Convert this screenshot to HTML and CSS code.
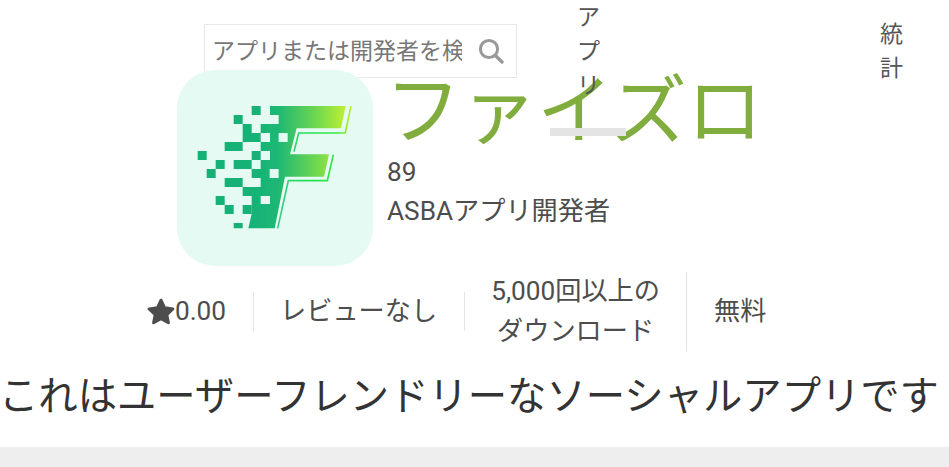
FILE: index.html
```html
<!DOCTYPE html>
<html lang="ja">
<head>
<meta charset="utf-8">
<title>ファイズロ</title>
<link rel="stylesheet" href="styles.css">
</head>
<body>
<header class="header">
  <form class="search">
    <input class="search-input" type="text" placeholder="アプリまたは開発者を検索">
    <svg class="search-icon" viewBox="0 0 26 26" width="26" height="26"><circle cx="11" cy="11" r="8.6" fill="none" stroke="#999" stroke-width="3"/><path d="M17.2 17.2 L24 24" stroke="#999" stroke-width="3.4" stroke-linecap="round"/></svg>
  </form>
  <nav class="nav">
    <a class="nav-item nav-apps">アプリ<span class="nav-bar"></span></a>
    <a class="nav-item nav-stats">統計</a>
  </nav>
</header>
<section class="hero">
  <div class="app-icon">
    <svg viewBox="21 30 588 588" width="196" height="196">
      <defs>
        <linearGradient id="fg" gradientUnits="userSpaceOnUse" x1="240" y1="0" x2="530" y2="0">
          <stop offset="0" stop-color="#13b177"/>
          <stop offset=".3" stop-color="#1fb873"/>
          <stop offset=".7" stop-color="#72d84f"/>
          <stop offset="1" stop-color="#c2f134"/>
        </linearGradient>
        <linearGradient id="ln" gradientUnits="userSpaceOnUse" x1="320" y1="0" x2="545" y2="0">
          <stop offset="0" stop-color="#3fc98f"/>
          <stop offset=".35" stop-color="#22e05a"/>
          <stop offset=".8" stop-color="#35e83c"/>
          <stop offset="1" stop-color="#c6f02c"/>
        </linearGradient>
        <filter id="soft" x="-5%" y="-5%" width="110%" height="110%"><feGaussianBlur stdDeviation="1.1"/></filter>
      </defs>
      <g filter="url(#soft)">
        <path fill="url(#fg)" d="M300 138H527L513 205H380L360 283H477L462 350H345L314 505H235L245 462V408H218V381H272V354H245V327H272V300H300V273H272V246H300V219H272V192H326V165H300Z"/>
        <path fill="#e5faf2" d="M326 219h27v27h-27zM299 327h27v27h-27zM272 408h28v24h-28z"/>
        <g fill="#14b176">
          <path d="M245 138h27v27h-27zM191 165h27v27h-27zM218 192h27v27h27v27h-54zM164 246h54v27h-54zM245 273h27v27h-27zM83 273h27v27H83zM137 300h27v27h-27zM191 300h54v27h-54zM110 327h27v27h-27zM164 354h54v27h-54zM137 408h27v27h-27zM164 435h27v27h-27zM218 435h27v27h-27zM191 489h27v16h-27z"/>
        </g>
        <path fill="none" stroke="url(#ln)" stroke-width="5" d="M543 138L526 219H386L372 275"/>
        <path fill="none" stroke="url(#ln)" stroke-width="5" d="M490 284L472 362H355L323 505"/>
      </g>
    </svg>
  </div>
  <div class="app-info">
    <h1 class="app-title">ファイズロ</h1>
    <div class="app-line">89</div>
    <div class="app-line">ASBAアプリ開発者</div>
  </div>
</section>
<section class="stats">
  <div class="stat stat-rating">
    <svg class="star" viewBox="0 0 28 27" width="28" height="27"><path fill="#4d4d4d" stroke="#4d4d4d" stroke-width="3" stroke-linejoin="round" d="M14 2.2l3.6 7.6 8.3 1.1-6.1 5.7 1.6 8.2L14 20.8l-7.4 4 1.6-8.2-6.1-5.7 8.3-1.1z"/></svg>
    <span>0.00</span>
  </div>
  <div class="stat stat-reviews">レビューなし</div>
  <div class="stat">5,000回以上の<br>ダウンロード</div>
  <div class="stat stat-last">無料</div>
</section>
<p class="desc">これはユーザーフレンドリーなソーシャルアプリです</p>
<div class="band"></div>
</body>
</html>
```
FILE: styles.css
```css
* { box-sizing: border-box; }
html, body { margin: 0; padding: 0; }
body {
  width: 949px;
  height: 467px;
  overflow: hidden;
  background: #fff;
  color: #4d4d4d;
  font-family: Roboto, "Noto Sans CJK JP", sans-serif;
}
.header {
  display: flex;
  align-items: center;
  height: 102px;
  padding-left: 204px;
}
.search {
  display: flex;
  align-items: center;
  width: 313px;
  height: 54px;
  padding: 0 12px 0 7px;
  border: 1px solid #e8e8e8;
  background: #fff;
}
.search-input {
  flex: 1;
  min-width: 0;
  border: 0;
  padding: 0;
  outline: 0;
  background: transparent;
  font: 23px Roboto, "Noto Sans CJK JP", sans-serif;
  color: #4d4d4d;
}
.search-input::placeholder { color: #777; opacity: 1; }
.search-icon { flex: none; margin-left: 16px; }
.nav { display: flex; align-items: center; align-self: flex-start; padding-top: 1px; }
.nav-item {
  display: block;
  position: relative;
  font-size: 23px;
  line-height: 34px;
  width: 24px;
  color: #555;
}
.nav-apps { margin-left: 60px; }
.nav-stats { margin-left: 279px; }
.nav-bar {
  position: absolute;
  z-index: 2;
  left: -27px;
  top: 127px;
  width: 76px;
  height: 8px;
  background: #e4e4e4;
}
.hero {
  display: flex;
  gap: 14px;
  margin-top: -32px;
  padding-left: 177px;
}
.app-icon {
  flex: none;
  width: 196px;
  height: 196px;
  border-radius: 38px;
  background: #e5faf2;
  overflow: hidden;
}
.app-icon svg { display: block; }
.app-title {
  margin: 0 0 -2px -2px;
  font-size: 76px;
  font-weight: 400;
  line-height: 85px;
  color: #80ad3e;
  white-space: nowrap;
}
.app-line { font-size: 26.2px; line-height: 38.5px; }
.stats {
  display: flex;
  align-items: center;
  margin-top: 6px;
  padding-left: 121px;
  font-size: 26.2px;
  line-height: 39.5px;
}
.stat {
  padding: 0 26px;
  border-right: 1px solid #e4e4e4;
  text-align: center;
  white-space: nowrap;
}
.stat-rating { display: flex; align-items: center; padding-right: 27px; }
.stat-reviews { padding-right: 27px; }
.star { flex: none; }
.stat-last { border-right: 0; padding-left: 27px; }
.desc {
  margin: 27px 0 0 -1px;
  height: 38px;
  font-size: 39.35px;
  line-height: 38px;
  color: #333;
  white-space: nowrap;
}
.band { height: 20px; margin-top: 31px; background: #eee; }
```
